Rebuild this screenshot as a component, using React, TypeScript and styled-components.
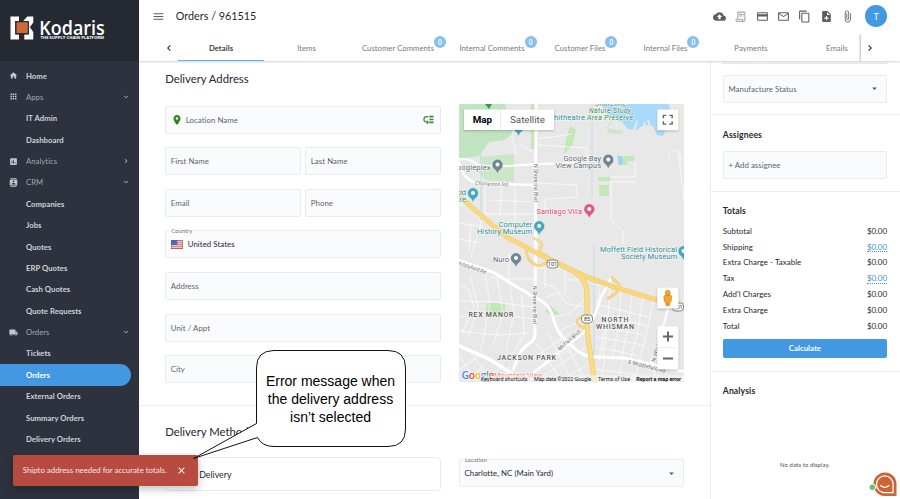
import React from "react";
import styled, { createGlobalStyle, css } from "styled-components";
import {
  MdBackup, MdOutlineReceiptLong, MdCreditCard, MdMailOutline, MdContentCopy, MdNoteAdd, MdAttachFile,
  MdMenu, MdHome, MdApps, MdAssessment, MdContacts, MdLocalShipping, MdExpandMore, MdChevronRight,
  MdChevronLeft, MdPlace, MdClose, MdArrowDropDown, MdFullscreen,
} from "react-icons/md";

const GlobalStyle = createGlobalStyle`
  *, *::before, *::after { box-sizing: border-box; }
  body { margin: 0; font-family: Lato, "Liberation Sans", sans-serif; color: #2b3038; background: #fff; }
  svg { display: block; flex: none; }
`;

const Shell = styled.div`
  position: relative;
  display: grid;
  grid-template-columns: 139px 1fr;
  width: 900px;
  height: 499px;
  overflow: hidden;
`;

/* Sidebar */
const Sidebar = styled.aside`
  background: #2d323e;
  overflow: hidden;
`;
const Brand = styled.div`
  height: 61px;
  padding: 15.5px 0 0 9.5px;
  background: #252932;
`;
const Nav = styled.nav`
  padding-top: 3.9px;
`;
const NavItem = styled.a<{ $group?: boolean; $active?: boolean }>`
  display: grid;
  grid-template-columns: 17px 1fr 8px;
  align-items: center;
  height: 21.38px;
  width: 131px;
  padding: 0 1px 0 9px;
  border-radius: 0 11px 11px 0;
  font-size: 7.7px;
  font-weight: ${(p) => (p.$group ? 400 : 700)};
  letter-spacing: 0.05px;
  white-space: nowrap;
  color: ${(p) => (p.$active ? "#fff" : p.$group ? "#a4a7ae" : "#d0d2d7")};
  background: ${(p) => (p.$active ? "#4299e1" : "transparent")};
  svg { color: #c6c8cc; }
`;

/* Top bar */
const Page = styled.main`
  display: grid;
  grid-template-rows: 61px 1fr;
  min-width: 0;
`;
const Top = styled.header`
  display: grid;
  grid-template-rows: 34px 27px;
  background: #fff;
  box-shadow: 0 1px 2px rgba(0, 0, 0, 0.18);
  z-index: 1;
`;
const TitleBar = styled.div`
  display: flex;
  align-items: center;
  padding: 0 13px 1.6px 13.3px;
  color: #5b5d61;
`;
const Title = styled.h1`
  flex: 1;
  margin: 0 0 0 10.5px;
  font-size: 10.8px;
  line-height: 14px;
  font-weight: 400;
  color: #25282d;
`;
const Actions = styled.div`
  display: flex;
  gap: 8.3px;
  margin: 0 11.5px 0 0;
  svg:nth-child(2) { color: #a9a9ab; }
`;
const Avatar = styled.div`
  display: grid;
  place-items: center;
  width: 21.6px;
  height: 21.6px;
  border-radius: 50%;
  background: #4299e1;
  color: #fff;
  font-size: 9px;
`;
const TabBar = styled.div`
  display: grid;
  grid-template-columns: 39px 683px 39px;
  overflow: hidden;
`;
const Pager = styled.button<{ $edge?: boolean }>`
  display: flex;
  align-items: center;
  justify-content: ${(p) => (p.$edge ? "flex-start" : "flex-end")};
  padding: 0 2.6px;
  border: 0;
  background: #fff;
  color: #222;
  ${(p) => p.$edge && css`box-shadow: -1px 0 2px rgba(0, 0, 0, 0.28);`}
`;
const Tabs = styled.div`
  display: flex;
  overflow: hidden;
`;
const Tab = styled.div<{ $w: number; $active?: boolean }>`
  flex: 0 0 ${(p) => p.$w}px;
  display: flex;
  align-items: center;
  justify-content: center;
  height: 27px;
  padding-top: 1px;
  font-size: 7.7px;
  font-weight: ${(p) => (p.$active ? 700 : 400)};
  letter-spacing: 0.05px;
  white-space: nowrap;
  color: ${(p) => (p.$active ? "#3c3f44" : "#77797d")};
  border-bottom: 1.5px solid ${(p) => (p.$active ? "#63b3ed" : "transparent")};
`;
const TabLabel = styled.span`
  position: relative;
`;
const Badge = styled.i`
  position: absolute;
  left: 100%;
  top: -6.4px;
  display: grid;
  place-items: center;
  width: 12px;
  height: 12px;
  border-radius: 50%;
  background: #86c0ee;
  color: #fff;
  font: 700 6.5px Lato, sans-serif;
`;

/* Content */
const Content = styled.div`
  display: grid;
  grid-template-columns: 570.5px 190.5px;
  overflow: hidden;
`;
const Form = styled.div`
  height: 438px;
`;
const Section = styled.section<{ $h?: number }>`
  display: grid;
  grid-template-columns: 276px 225px;
  column-gap: 17.7px;
  align-content: start;
  height: ${(p) => (p.$h ? `${p.$h}px` : "auto")};
  padding: 10.6px 0 0 26.2px;
  ${(p) => p.$h && css`border-bottom: 1.5px solid #eeeff0;`}
`;
const Heading = styled.h2<{ $h: number; $pt?: number }>`
  grid-column: 1 / -1;
  margin: 0;
  height: ${(p) => p.$h}px;
  padding-top: ${(p) => p.$pt ?? 0}px;
  line-height: 14px;
  font-size: 11.3px;
  font-weight: 400;
  color: #25282d;
`;
const Fields = styled.div`
  display: grid;
  grid-template-columns: 1fr 1fr;
  grid-auto-rows: 28px;
  gap: 13.62px 4px;
  padding-top: 2px;
`;
const Field = styled.div<{ $wide?: boolean; $dark?: boolean; $gap?: number }>`
  position: relative;
  display: flex;
  align-items: center;
  gap: ${(p) => p.$gap ?? 5}px;
  height: 28px;
  padding: 0 6px 0 4.6px;
  grid-column: ${(p) => (p.$wide ? "1 / -1" : "auto")};
  border: 1px solid #e9ebee;
  border-radius: 2px;
  background: #fafbfd;
  font-size: 7.8px;
  letter-spacing: 0.06px;
  white-space: nowrap;
  color: ${(p) => (p.$dark ? "#25282d" : "#606368")};
`;
const Grow = styled.span`
  flex: 1;
`;
const FloatLabel = styled.span`
  position: absolute;
  top: -4px;
  left: 3px;
  padding: 0 2px;
  background: linear-gradient(#fff 45%, #fafbfd 45%);
  font-size: 5.8px;
  line-height: 8px;
  color: #6d7075;
`;
const MethodCard = styled.div`
  height: 34.5px;
  padding-left: 33px;
  border: 1px solid #e8eaed;
  border-radius: 4px;
  font-size: 8.8px;
  line-height: 33px;
  color: #25282d;
`;
const LocationSlot = styled.div`
  padding-top: 2.3px;
`;
const MapBox = styled.div`
  width: 225px;
  height: 278px;
  overflow: hidden;
`;

/* Right column */
const Side = styled.aside`
  border-left: 1.5px solid #ebecee;
  height: 438px;
`;
const Panel = styled.section<{ $h: number; $pt: number }>`
  height: ${(p) => p.$h}px;
  padding: ${(p) => p.$pt}px 13px 0 12.3px;
  border-bottom: 1.3px solid #ebecee;
`;
const ClippedField = styled.div`
  height: 3.3px;
  margin-bottom: 10.3px;
  border: 1px solid #e9ebee;
  border-top: 0;
  background: #fafbfd;
`;
const PanelTitle = styled.h3<{ $mb: number }>`
  margin: 0 0 ${(p) => p.$mb}px;
  font-size: 8.6px;
  line-height: 12px;
  font-weight: 700;
  letter-spacing: 0.13px;
  color: #25282d;
`;
const TotalRow = styled.div`
  display: flex;
  justify-content: space-between;
  height: 15.82px;
  font-size: 7.9px;
  line-height: 12px;
  letter-spacing: 0.05px;
  color: #25282d;
`;
const Amount = styled.span<{ $link?: boolean }>`
  height: 11.5px;
  letter-spacing: -0.08px;
  font-size: 8px;
  ${(p) => p.$link && css`color: #4a90d2; border-bottom: 1px dotted #4a90d2;`}
`;
const Calculate = styled.button`
  display: block;
  width: 100%;
  height: 19.5px;
  margin-top: 3.2px;
  border: 0;
  border-radius: 2px;
  background: #4299e1;
  color: #fff;
  font: 700 7.8px Lato, sans-serif;
`;
const Empty = styled.p`
  margin: 63.5px 0 0;
  text-align: center;
  font-size: 5.9px;
  letter-spacing: 0.1px;
  color: #4b4e53;
`;

/* Overlays */
const Toast = styled.div`
  position: absolute;
  left: 13px;
  top: 455px;
  width: 184.5px;
  height: 30.5px;
  display: flex;
  align-items: center;
  justify-content: space-between;
  padding: 0 10.5px 0 9.8px;
  border-radius: 2px;
  background: #b84b40;
  box-shadow: 0 3px 9px rgba(0, 0, 0, 0.25);
  color: #f7e4e2;
  font-size: 7.85px;
  white-space: nowrap;
  z-index: 2;
`;
const Callout = styled.div`
  position: absolute;
  left: 190px;
  top: 348px;
  width: 218px;
  height: 114px;
  z-index: 3;
`;
const CalloutText = styled.p`
  position: absolute;
  left: 66px;
  top: 24px;
  width: 149px;
  margin: 0;
  text-align: center;
  font: 14px/18px "Liberation Sans", Arial, sans-serif;
  color: #000;
`;
const ChatButton = styled.div`
  position: absolute;
  left: 868px;
  top: 470px;
  z-index: 2;
`;

const Logo = () => (
  <svg width="110" height="26" viewBox="0 0 110 26">
    <path d="M.5.5H9V5H5.2v13.500H9v5H.5z" fill="#fff" />
    <path d="M13 5.200 17.300.5h6v6l-3.500 4.700 3.500 4.800v7.500h-9v-5h4.500v-4.500L17 8z" fill="#fff" />
    <path d="M5.900 5.700h12.400v12H5.900z" fill="#cf6a38" stroke="#252932" strokeWidth="1.200" />
    <text x="29.300" y="18.700" fontFamily="Open Sans" fontWeight="600" fontSize="19" fill="#fff" textLength="65.500" lengthAdjust="spacingAndGlyphs">Kodaris</text>
    <text x="30.500" y="23.200" fontFamily="Open Sans" fontWeight="700" fontSize="3.700" fill="#fff" textLength="63.500" lengthAdjust="spacingAndGlyphs">THE SUPPLY CHAIN PLATFORM</text>
  </svg>
);

const Flag = () => (
  <svg width="12" height="9" viewBox="0 0 12 9">
    <path fill="#f4dcdc" d="M0 0h12v9H0z" />
    <path d="M0 .7h12M0 2.7h12M0 4.7h12M0 6.7h12M0 8.5h12" stroke="#dc6e6b" />
    <path fill="#4362b8" d="M0 0h6.3v5H0z" />
    <path d="M1 1.5h5M1 3.5h5" stroke="#8296d0" strokeWidth=".6" strokeDasharray=".7 .7" />
    <path d="M.3.3h11.4v8.4H.3z" fill="none" stroke="#756073" strokeWidth=".6" />
  </svg>
);

const PickIcon = () => (
  <svg width="11" height="10" viewBox="0 0 11 10" fill="none" stroke="#3b8a31">
    <path d="M5.300 1.700H3.700a2.700 2.700 0 0 0 0 5.500h.8" strokeWidth="1.300" />
    <path d="M3.800 5v4.400L6 7.200z" fill="#3b8a31" stroke="none" />
    <path d="M6.300 1.700h4.200M6.300 4.500h4.200M6.300 7.300h4.200" strokeWidth="1.700" />
  </svg>
);

const Pin = ({ x, y, c }: { x: number; y: number; c: string }) => (
  <g transform={`translate(${x} ${y})`}>
    <path d="M0 7.600C-.9 4.800-1.500 3.700-3.900 2a5.400 5.400 0 1 1 7.800 0C1.500 3.700.9 4.800 0 7.600z" fill={c} stroke="#fff" strokeWidth=".3" />
    <circle cy="-1.900" r="2" fill="#fff" />
  </g>
);

type LabelProps = { x: number; y: number; w: number; c?: string; s?: number; t: string; r?: number; b?: number };
const MapLabel = ({ x, y, w, c = "#5d6b7a", s = 7.5, t, r = 0, b = 400 }: LabelProps) => (
  <text transform={`translate(${x} ${y}) rotate(${r})`} fontFamily="Roboto" fontSize={s} fontWeight={b} fill={c}
    stroke="#fff" strokeOpacity=".75" strokeWidth="1.2" paintOrder="stroke" textLength={w}>{t}</text>
);

const Shield = ({ x, y, t }: { x: number; y: number; t: string }) => (
  <g>
    <rect x={x - 5.5} y={y - 4} width="11" height="8" rx="3" fill="#fff" stroke="#66696c" strokeWidth=".8" />
    <text x={x} y={y + 2} fontFamily="Roboto" fontSize="5.5" textAnchor="middle" fill="#333">{t}</text>
  </g>
);

const FREEWAY = "M458 195 483 217 507 237 537 253 567 268 587 277 617 288 657 300 686 306";
const ROUTE85 = "M567 268C582 275 587 282 587 295V320C587 340 591 355 595 384";

const AreaMap = () => (
  <svg width="225" height="278" viewBox="459 104 225 278">
    <path fill="#e8e8e8" d="M459 104h225v278H459z" />
    <path d="M596 104h88v22l-22-4-16 3-38-8z" fill="#ece9e2" />
    <path d="M601 104h68l2 12-8 20-6-1-4-9-9-1-8 5-8-1-6-7-8-3-8-6z" fill="#aadafb" />
    <path d="m644 122 3 10M634 130l3-9M650 127l-2-7" stroke="#ece9e2" strokeWidth="2" />
    <path d="M459 104h46l8 30-9 6-15 2-10 14-20 3z" fill="#c0e3c1" />
    <path d="m480 157 34-3v28l-28-2-7-8zM607 128l16 3v3l-15-1z" fill="#cbe7c7" />
    <path d="M531 104h4v45h-4zM570 126l6 4-4 16-8 8 2-15zM598 177h12v4h-12zM599 185h10v11h-10zM618 156h17v5h-8v4h-9zM487 303h18v8l-12 5-7-4zM551 306l9 8-8 2-7-5z" fill="#c2e7b9" />
    <path d="M617 155l5 2 1 7-4 1z" fill="#9bd0f7" />
    <path d="M592 104v92M594 244v138M481 150v70M616 115l-9 13" stroke="#c0dced" strokeWidth="1" fill="none" />
    {/* local streets */}
    <g stroke="#fff" strokeWidth=".8" fill="none" strokeOpacity=".85">
      <path d="M485 184v30M502 184l-2 31M515 183v40M485 214h48M505 225h29M490 200l40 2M537 183l40 2v12l-32 2v16M537 139l35-5M537 145l50 3v16M520 115l-8 20 4 20M520 145l13 7" />
      <path d="M611 183v37l12 12v12M635 157v20h-24M678 150l6 50M669 158c0-14 16-8 11 6M610 182h26" />
      <path d="M459 205h14l8 18-10 34M459 223l24 4M459 239l20 4M471 223l-2 30M537 268h28v25M545 268v20M509 253v26h25M509 279l-18-2M565 280h22M592 284l14 2" />
      <path d="M459 285l10 4 5 18-12 26M470 275l8 32-9 28M485 273l5 30-9 48M497 279l6 34-10 32M510 286l4 27-8 38M522 295l2 40-14 24M459 301l35 1 40 5M459 317l40-2 37 4M459 331l40 4 30-2" />
      <path d="M459 356l18 26M473 356l20 26M459 370l20-14M466 382l18-17M485 382l17-16M500 382l10-16M536 343l26 38M548 333l24 49M560 330l24 49M530 360l40-26M537 380l48-32M520 382l55-36M558 382l31-18" />
      <path d="M600 290l-4 20 10 11-7 40M610 288l-2 30-5 40M621 291l-3 40-6 27M632 294l-4 35-7 30M643 298l-6 37-7 26M653 301l-7 35-7 26M599 305l50 12M599 314l48 12M597 326l47 9M597 337l46 8M596 347l43 9M596 369l41 6M605 358l-5 24M623 359l-6 23M640 363l-7 19M657 367l-5 15" />
      <path d="M540 282l14 5 13 17 18 3M546 297l15-5 10 8M554 317l17-4 14-14M563 329l22-10" />
    </g>
    <g stroke="#fff" fill="none" strokeWidth="3">
      <path d="M536 104 535 334C535 344 523 344 519 355L513 370" />
      <path d="M457 260 493 272 517 287 543 302C556 311 551 325 563 338 575 348 580 357 597 357L624 358 686 372" />
      <path d="M457 345 489 359 522 380" strokeWidth="3.6" />
      <path d="M457 160C471 156 472 164 482 166L508 166 537 164 580 163" strokeWidth="2.2" />
      <path d="M459 162C462 174 467 182 478 183L533 185" strokeWidth="2.4" />
      <path d="M532 374 583 333C594 322 597 309 601 297L612 277" strokeWidth="2.6" />
      <path d="M670 302 658 345 650 364" strokeWidth="2" />
    </g>
    <g fill="none" strokeLinejoin="round">
      <path d="M527 247C525 256 530 263 538 266 548 264 553 256 541 254 538 246 545 246 540 241L533 238M607 299c7-4 14-8 12-15l-8-7M586 328c-11-1-12-12-1-11" stroke="#eebf55" strokeWidth="2.4" />
      <path d="M527 247C525 256 530 263 538 266 548 264 553 256 541 254 538 246 545 246 540 241L533 238M607 299c7-4 14-8 12-15l-8-7M586 328c-11-1-12-12-1-11" stroke="#ffe08a" strokeWidth="1.4" />
      <path d={FREEWAY} stroke="#efc25c" strokeWidth="4.8" />
      <path d={ROUTE85} stroke="#efc25c" strokeWidth="5" />
      <path d={FREEWAY} stroke="#fbdc83" strokeWidth="3.8" />
      <path d={ROUTE85} stroke="#fbdc83" strokeWidth="4" />
      <path d={FREEWAY} stroke="#efc25c" strokeWidth=".5" />
    </g>
    <Shield x={552.5} y={264} t="101" />
    <Shield x={587} y={319} t="85" />
    <Shield x={678} y={307} t="101" />
    <MapLabel x={554} y={119.8} w={31} c="#1f8b99" t="hitheatre" />
    <g fontStyle="italic">
      <MapLabel x={595} y={106} w={31} c="#3a8b52" s={7} t="Shoreline" />
      <MapLabel x={589} y={112.7} w={42} c="#3a8b52" s={7} t="Nature Study" />
      <MapLabel x={587} y={120} w={46} c="#3a8b52" s={7} t="Area Preserve" />
    </g>
    <MapLabel x={563.5} y={160.7} w={37.5} t="Google Bay" />
    <MapLabel x={555.5} y={168.3} w={45.5} t="View Campus" />
    <MapLabel x={457} y={169.7} w={33.5} t="oogleplex" />
    <MapLabel x={475} y={184.8} w={33} s={5.2} r={3} c="#666" t="Charleston Rd" />
    <MapLabel x={457} y={194.8} w={9} c="#1f8b99" t="oid" />
    <MapLabel x={455} y={201.8} w={11} c="#1f8b99" t="ure" />
    <MapLabel x={536.5} y={213.5} w={45.5} c="#d94477" t="Santiago Villa" />
    <MapLabel x={498.5} y={226.7} w={33.5} c="#1f8b99" t="Computer" />
    <MapLabel x={477} y={234.3} w={55} c="#1f8b99" t="History Museum" />
    <MapLabel x={493} y={262.3} w={16} t="Nuro" />
    <MapLabel x={600} y={251.5} w={77} c="#2a8794" t="Moffett Field Historical" />
    <MapLabel x={621} y={259.2} w={56} c="#2a8794" t="Society Museum" />
    <MapLabel x={534} y={164} w={38} s={5.2} r={90} c="#666" t="N Shoreline Blvd" />
    <MapLabel x={533} y={286} w={38} s={5.2} r={90} c="#666" t="N Shoreline Blvd" />
    <MapLabel x={456} y={264} w={31} s={5.2} r={19} c="#666" t="Middlefield Rd" />
    <MapLabel x={560} y={351} w={28} s={5.5} r={-42} c="#666" t="Moffett Blvd" />
    <MapLabel x={628} y={363.5} w={38} s={5.5} r={14} c="#666" t="E Middlefield Rd" />
    <MapLabel x={655} y={362} w={30} s={5.5} r={-74} c="#666" t="N Whisman" />
    <MapLabel x={468.5} y={317} w={45} s={7} b={500} c="#555" t="REX MANOR" />
    <MapLabel x={497} y={359.5} w={59} s={7} b={500} c="#555" t="JACKSON PARK" />
    <MapLabel x={601.5} y={322.3} w={27} s={7} b={500} c="#555" t="NORTH" />
    <MapLabel x={596} y={329.3} w={38} s={7} b={500} c="#555" t="WHISMAN" />
    <path d="m485 104 4 5 3-5z" fill="#329c46" />
    <Pin x={518.5} y={129} c="#45a9bc" />
    <Pin x={497.5} y={166.5} c="#6f8795" />
    <Pin x={608.3} y={161.5} c="#6f8795" />
    <Pin x={473} y={195} c="#45a9bc" />
    <Pin x={589.3} y={211} c="#de5889" />
    <Pin x={539.2} y={228} c="#45a9bc" />
    <Pin x={516} y={260} c="#6f8795" />
    <Pin x={683.5} y={253} c="#45a9bc" />
    {/* map controls */}
    <g style={{ filter: "drop-shadow(0 1px 1px rgba(0,0,0,.22))" }}>
      <rect x="464" y="109.5" width="90" height="20.5" fill="#fff" />
      <rect x="657.3" y="109.5" width="21.2" height="20.8" fill="#fff" />
      <rect x="657.3" y="287.5" width="21.2" height="21" fill="#fff" />
      <rect x="657.3" y="326.3" width="21.2" height="43" fill="#fff" />
    </g>
    <path d="M500.5 110v20M660 347.600h16" stroke="#e6e6e6" strokeWidth=".8" />
    <text x="472.800" y="122.900" fontFamily="Roboto" fontSize="9.800" fontWeight="700" textLength="19.200">Map</text>
    <text x="510" y="122.900" fontFamily="Roboto" fontSize="9.800" fill="#565656" textLength="35">Satellite</text>
    <MdFullscreen x={659} y={111} size={17.5} color="#666" />
    <path d="M668 331.500v10M663 336.500h10M663 358.600h10" stroke="#666" strokeWidth="2" />
    <g fill="#f5a623" stroke="#b77716" strokeWidth=".5">
      <path d="M665.300 295h5l1.500 1.500-.7 5-1 .3-.6 4h-1.200l-.5-2.800-.5 2.800H666l-.6-4-1-.3-.7-5z" />
      <circle cx="667.800" cy="292.800" r="2.500" />
    </g>
    <MapLabel x={494} y={377.5} w={49} s={7.5} c="#e07a45" t="Mountain View" />
    <text x="461.500" y="379" fontFamily="Open Sans" fontSize="10.500" fontWeight="600" stroke="#fff" strokeWidth="1" paintOrder="stroke" textLength="33">
      <tspan fill="#4285f4">G</tspan><tspan fill="#ea4335">o</tspan><tspan fill="#fbbc05">o</tspan><tspan fill="#4285f4">g</tspan><tspan fill="#34a853">l</tspan><tspan fill="#ea4335">e</tspan>
    </text>
    <path d="M481 375.200h203v6.800H481z" fill="#f4f4f4" fillOpacity=".65" />
    <g fontFamily="Roboto" fontSize="5.400" fill="#111">
      <text x="481" y="380.700" textLength="46.500">Keyboard shortcuts</text>
      <text x="534" y="380.700" textLength="57">Map data ©2022 Google</text>
      <text x="598" y="380.700" textLength="32">Terms of Use</text>
      <text x="636.300" y="380.700" textLength="44.700" fontWeight="700">Report a map error</text>
    </g>
  </svg>
);

type NavEntry = { t: string; icon?: React.ReactNode; open?: boolean; group?: boolean; active?: boolean };
const NAV: NavEntry[] = [
  { t: "Home", icon: <MdHome size={9} /> },
  { t: "Apps", icon: <MdApps size={9} />, group: true, open: true },
  { t: "IT Admin" }, { t: "Dashboard" },
  { t: "Analytics", icon: <MdAssessment size={9} />, group: true, open: false },
  { t: "CRM", icon: <MdContacts size={9} />, group: true, open: true },
  { t: "Companies" }, { t: "Jobs" }, { t: "Quotes" }, { t: "ERP Quotes" }, { t: "Cash Quotes" }, { t: "Quote Requests" },
  { t: "Orders", icon: <MdLocalShipping size={9} />, group: true, open: true },
  { t: "Tickets" }, { t: "Orders", active: true }, { t: "External Orders" }, { t: "Summary Orders" }, { t: "Delivery Orders" },
];

const TABS: [string, number, boolean][] = [
  ["Details", 86, false], ["Items", 85, false], ["Customer Comments", 98, true], ["Internal Comments", 90, true],
  ["Customer Files", 86, true], ["Internal Files", 85, true], ["Payments", 86, false], ["Emails", 86, false],
];

const TOTALS: [string, boolean][] = [
  ["Subtotal", false], ["Shipping", true], ["Extra Charge - Taxable", false], ["Tax", true],
  ["Add'l Charges", false], ["Extra Charge", false], ["Total", false],
];

export default function App() {
  return (
    <>
      <GlobalStyle />
      <Shell>
        <Sidebar>
          <Brand><Logo /></Brand>
          <Nav>
            {NAV.map((n, i) => (
              <NavItem key={i} $group={n.group} $active={n.active}>
                <span>{n.icon}</span>
                <span>{n.t}</span>
                {n.group && (n.open ? <MdExpandMore size={8} /> : <MdChevronRight size={8} />)}
              </NavItem>
            ))}
          </Nav>
        </Sidebar>
        <Page>
          <Top>
            <TitleBar>
              <MdMenu size={13} />
              <Title>Orders / 961515</Title>
              <Actions>
                <MdBackup size={13} /><MdOutlineReceiptLong size={13} /><MdCreditCard size={13} /><MdMailOutline size={13} />
                <MdContentCopy size={13} /><MdNoteAdd size={13} /><MdAttachFile size={13} />
              </Actions>
              <Avatar>T</Avatar>
            </TitleBar>
            <TabBar>
              <Pager><MdChevronLeft size={12} /></Pager>
              <Tabs>
                {TABS.map(([t, w, badge], i) => (
                  <Tab key={t} $w={w} $active={i === 0}>
                    <TabLabel>{t}{badge && <Badge>0</Badge>}</TabLabel>
                  </Tab>
                ))}
              </Tabs>
              <Pager $edge><MdChevronRight size={12} /></Pager>
            </TabBar>
          </Top>
          <Content>
            <Form>
              <Section $h={345}>
                <Heading $h={32}>Delivery Address</Heading>
                <Fields>
                  <Field $wide $gap={3}><MdPlace size={12} color="#2f8420" /><Grow>Location Name</Grow><PickIcon /></Field>
                  <Field>First Name</Field>
                  <Field>Last Name</Field>
                  <Field>Email</Field>
                  <Field>Phone</Field>
                  <Field $wide $dark><FloatLabel>Country</FloatLabel><Flag />United States</Field>
                  <Field $wide>Address</Field>
                  <Field $wide>Unit / Appt</Field>
                  <Field>City</Field>
                  <Field />
                </Fields>
                <MapBox><AreaMap /></MapBox>
              </Section>
              <Section>
                <Heading $h={40.4} $pt={8}>Delivery Method</Heading>
                <MethodCard>Delivery</MethodCard>
                <LocationSlot>
                  <Field $dark><FloatLabel>Location</FloatLabel><Grow>Charlotte, NC (Main Yard)</Grow><MdArrowDropDown size={11} color="#555" /></Field>
                </LocationSlot>
              </Section>
            </Form>
            <Side>
              <Panel $h={54.2} $pt={0}>
                <ClippedField />
                <Field><Grow>Manufacture Status</Grow><MdArrowDropDown size={11} color="#555" /></Field>
              </Panel>
              <Panel $h={76.8} $pt={13.5}>
                <PanelTitle $mb={10}>Assignees</PanelTitle>
                <Field>+ Add assignee</Field>
              </Panel>
              <Panel $h={180} $pt={13.2}>
                <PanelTitle $mb={7.7}>Totals</PanelTitle>
                {TOTALS.map(([t, link]) => (
                  <TotalRow key={t}><span>{t}</span><Amount $link={link}>$0.00</Amount></TotalRow>
                ))}
                <Calculate>Calculate</Calculate>
              </Panel>
              <Panel $h={140} $pt={13.5}>
                <PanelTitle $mb={0}>Analysis</PanelTitle>
                <Empty>No data to display.</Empty>
              </Panel>
            </Side>
          </Content>
        </Page>
        <Toast>Shipto address needed for accurate totals.<MdClose size={11} color="#fff" /></Toast>
        <Callout>
          <svg width="218" height="114" viewBox="190 348 218 114">
            <path d="M256.500 423.500V368q0-17.500 17.500-17.500H388q17.500 0 17.500 17.500V429q0 17.500-17.500 17.500H274q-12 0-16.500-9L193.500 458.500z" fill="#fff" stroke="#111" strokeWidth="1" strokeLinejoin="round" />
          </svg>
          <CalloutText>Error message when<br />the delivery address<br />isn’t selected</CalloutText>
        </Callout>
        <ChatButton>
          <svg width="30" height="27" viewBox="868 470 30 27">
            <path d="M873.500 484a11.500 11.500 0 0 1 23 0v12h-12a11.500 11.500 0 0 1-11-12z" fill="#cc6433" />
            <path d="M876.500 484.200a8.300 8.300 0 0 1 16.600 0v8.500h-8.500a8.300 8.300 0 0 1-8.100-8.500z" fill="#cc6433" stroke="#fff" strokeWidth="1.300" />
            <path d="M880.500 485.500q4.200 3.600 8.400 0" fill="none" stroke="#fff" strokeWidth="1.200" strokeLinecap="round" />
            <circle cx="872.300" cy="487.300" r="3.300" fill="#68c36d" stroke="#fff" strokeWidth="1" />
          </svg>
        </ChatButton>
      </Shell>
    </>
  );
}
